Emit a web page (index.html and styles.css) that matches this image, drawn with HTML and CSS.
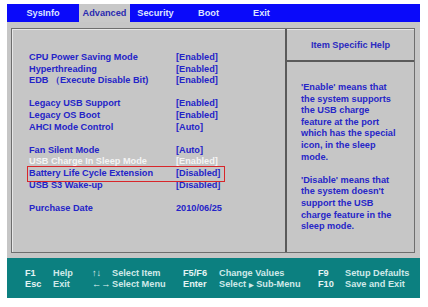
FILE: index.html
```html
<!DOCTYPE html>
<html lang="en">
<head>
    <meta charset="UTF-8">
    <meta name="viewport" content="width=device-width, initial-scale=1.0">
    <title>BIOS Setup - Advanced</title>
    <link rel="stylesheet" href="styles.css">
</head>
<body>
    <div class="screen">
        <div class="tabs">
            <div class="tab tab-sysinfo">SysInfo</div>
            <div class="tab tab-advanced active">Advanced</div>
            <div class="tab tab-security">Security</div>
            <div class="tab tab-boot">Boot</div>
            <div class="tab tab-exit">Exit</div>
        </div>

        <div class="main">
            <div class="panel">
                <div class="settings">
                    <div class="row"><span class="label">CPU Power Saving Mode</span><span class="value">[Enabled]</span></div>
                    <div class="row"><span class="label">Hyperthreading</span><span class="value">[Enabled]</span></div>
                    <div class="row"><span class="label">EDB （Execute Disable Bit)</span><span class="value">[Enabled]</span></div>
                    <div class="row blank"></div>
                    <div class="row"><span class="label">Legacy USB Support</span><span class="value">[Enabled]</span></div>
                    <div class="row"><span class="label">Legacy OS Boot</span><span class="value">[Enabled]</span></div>
                    <div class="row"><span class="label">AHCI Mode Control</span><span class="value">[Auto]</span></div>
                    <div class="row blank"></div>
                    <div class="row"><span class="label">Fan Silent Mode</span><span class="value">[Auto]</span></div>
                    <div class="row current"><span class="label">USB Charge In Sleep Mode</span><span class="value">[Enabled]</span></div>
                    <div class="row marked"><span class="label">Battery Life Cycle Extension</span><span class="value">[Disabled]</span></div>
                    <div class="row"><span class="label">USB S3 Wake-up</span><span class="value">[Disabled]</span></div>
                    <div class="row blank"></div>
                    <div class="row"><span class="label">Purchase Date</span><span class="value">2010/06/25</span></div>
                </div>

                <div class="help">
                    <div class="help-title">Item Specific Help</div>
                    <div class="help-text">
                        <p>'Enable' means that<br>the system supports<br>the USB charge<br>feature at the port<br>which has the special<br>icon, in the sleep<br>mode.</p>
                        <p>'Disable' means that<br>the system doesn't<br>support the USB<br>charge feature in the<br>sleep mode.</p>
                    </div>
                </div>
            </div>
        </div>

        <div class="footer">
            <span class="key">F1</span><span class="desc">Help</span>
            <span class="key">↑↓</span><span class="desc">Select Item</span>
            <span class="key">F5/F6</span><span class="desc">Change Values</span>
            <span class="key">F9</span><span class="desc">Setup Defaults</span>

            <span class="key">Esc</span><span class="desc">Exit</span>
            <span class="key">←→</span><span class="desc">Select Menu</span>
            <span class="key">Enter</span><span class="desc">Select <span class="arrow">▶</span> Sub-Menu</span>
            <span class="key">F10</span><span class="desc">Save and Exit</span>
        </div>
    </div>
</body>
</html>
```

FILE: styles.css
```css
body {
    margin: 0;
    background: #fff;
    font-family: 'Liberation Sans', Arial, sans-serif;
    font-weight: bold;
    font-size: 9.2px;
}
.screen {
    width: 413px;
    margin: 4px 0 0 7px;
}

/* top menu */
.tabs {
    display: flex;
    height: 18px;
    background-color: #0a0afa;
}
.tab {
    color: #dde3ff;
    font-size: 9.2px;
    line-height: 18px;
    text-align: center;
}
.tab-sysinfo { width: 72px; }
.tab-advanced { width: 51px; }
.tab-security { width: 51px; }
.tab-boot { width: 55px; }
.tab-exit { width: 51px; }
.tab.active {
    background-color: #c8c8c8;
    color: #2b2bb0;
}

/* grey area */
.main {
    height: 236px;
    background-color: #c6c6c6;
    padding: 6px 5px 5px 4px;
    box-sizing: border-box;
}
.panel {
    height: 100%;
    box-sizing: border-box;
    border: 1px solid #6e6e6e;
    box-shadow: inset 1px 1px 0 #e8e8e8;
    display: grid;
    grid-template-columns: 275px 1fr;
}
.settings {
    padding: 23px 0 0 17px;
    border-right: 2px solid #5a5a5a;
}
.row {
    display: flex;
    height: 11.6px;
    line-height: 11.6px;
    color: #2424c8;
    white-space: nowrap;
}
.label { width: 147px; }
.row.current { color: #f4f4f4; }
.row.marked {
    width: 194px;
    outline: 1.5px solid #d8262a;
    outline-offset: 1.5px;
}

.help-title {
    height: 31px;
    line-height: 32px;
    text-align: center;
    color: #2b2bc0;
    border-bottom: 2px solid #5a5a5a;
}
.help-text {
    padding: 20px 0 0 14px;
    color: #2626c8;
    line-height: 11.6px;
}
.help-text p {
    margin: 0 0 11.6px;
}

/* key legend */
.footer {
    height: 40px;
    box-sizing: border-box;
    padding: 10px 0 0 18px;
    background-color: #0c8080;
    display: grid;
    grid-template-columns: 28px 39px 20px 71px 36px 99px 27px 1fr;
    grid-auto-rows: 10.5px;
    line-height: 10.5px;
    white-space: nowrap;
}
.key { color: #e4f4f4; }
.desc { color: #cfe9e9; }
.arrow { font-size: 6px; }
```
